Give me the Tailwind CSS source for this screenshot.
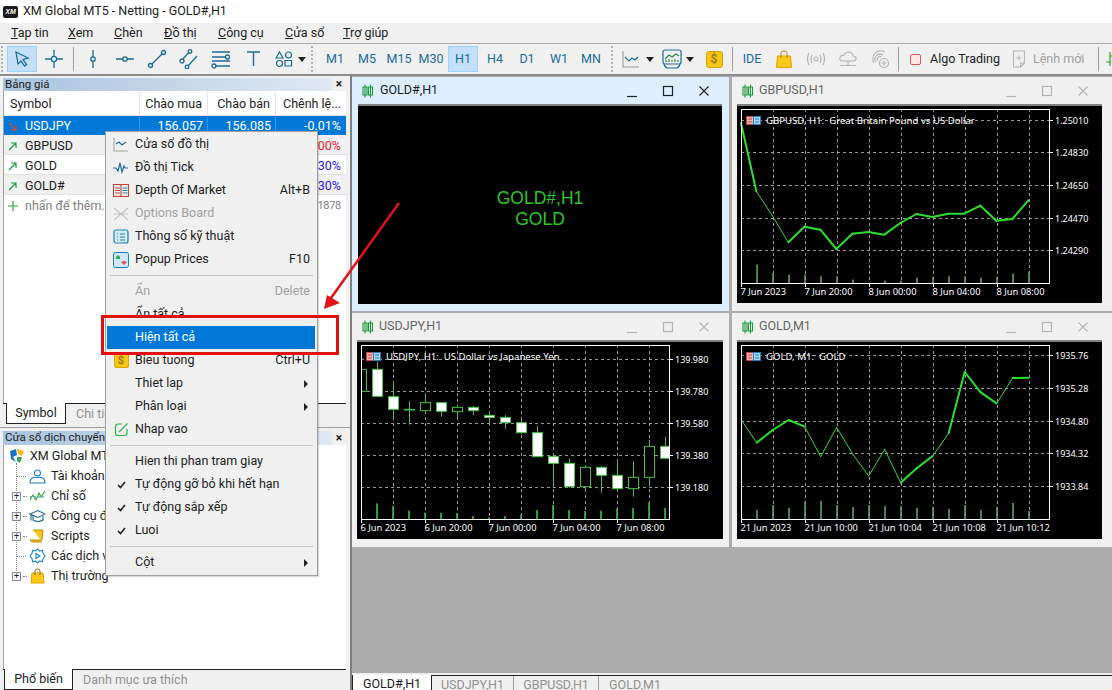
<!DOCTYPE html>
<html lang="en">
<head>
  <meta charset="UTF-8">
  <title>XM Global MT5</title>
  <script src="https://cdn.jsdelivr.net/npm/@tailwindcss/browser@4"></script>
</head>
<body class="relative w-[1112px] h-[690px] overflow-hidden bg-[#f0f0f0] font-['Roboto',sans-serif] text-[12.5px] text-[#1c1c1c]">

  <!-- title bar -->
  <div class="h-[23px] bg-white flex items-center pl-[3px] gap-[5px] text-[12.5px]">
    <div class="w-[15px] h-[12px] rounded-[2px] bg-[#1a1a1a] text-white text-[7px] font-bold italic leading-[12px] text-center font-['Liberation_Sans',sans-serif]">XM</div>
    <span>XM Global MT5 - Netting - GOLD#,H1</span>
  </div>

  <!-- menu -->
  <div class="h-[20px] flex items-center pl-[11px]">
    <span class="w-[57px]"><u>T</u>ap tin</span>
    <span class="w-[46px]"><u>X</u>em</span>
    <span class="w-[50px]"><u>C</u>hèn</span>
    <span class="w-[54px]"><u>Đ</u>ồ thị</span>
    <span class="w-[67px]"><u>C</u>ông cụ</span>
    <span class="w-[58px]"><u>C</u>ửa sổ</span>
    <span><u>T</u>rợ giúp</span>
  </div>

  <!-- toolbar -->
  <div class="h-[33px] border-t border-[#a8a8a8] border-b-2 border-b-[#8c8c8c] flex items-center overflow-hidden text-[#1b6a97] [&>*]:shrink-0">
    <div class="w-[6px] h-[26px] ml-[1px] mr-[-1px] border-l-2 border-dotted border-[#b0b0b0]"></div>
    <button class="w-[30px] h-[26px] mx-[1px] bg-[#c4e0f8] border border-[#99d1ff] flex items-center justify-center">
      <svg width="18" height="18" viewBox="0 0 18 18" fill="none" stroke="#1b6a97" stroke-width="1.3"><path d="M3 2l12 6-5 1.5 3.5 5-2 1.5-3.5-5L5 14z"/></svg>
    </button>
    <div class="w-8 flex justify-center"><svg width="20" height="20" viewBox="0 0 20 20" fill="none" stroke="#1b6a97" stroke-width="1.3"><path d="M10 1v6M10 13v6M1 10h6M13 10h6"/><circle cx="10" cy="10" r="2.6"/></svg></div>
    <div class="w-[7px] h-[24px] flex justify-center"><div class="w-px bg-[#a0a0a0]"></div></div>
    <div class="w-8 flex justify-center"><svg width="20" height="20" viewBox="0 0 20 20" fill="none" stroke="#1b6a97" stroke-width="1.3"><path d="M10 1v7M10 12v7"/><circle cx="10" cy="10" r="2.2"/></svg></div>
    <div class="w-8 flex justify-center"><svg width="20" height="20" viewBox="0 0 20 20" fill="none" stroke="#1b6a97" stroke-width="1.3"><path d="M1 10h7M12 10h7"/><circle cx="10" cy="10" r="2.2"/></svg></div>
    <div class="w-8 flex justify-center"><svg width="20" height="20" viewBox="0 0 20 20" fill="none" stroke="#1b6a97" stroke-width="1.3"><path d="M5 15L15 5"/><circle cx="3.5" cy="16.5" r="2"/><circle cx="16.5" cy="3.5" r="2"/></svg></div>
    <div class="w-8 flex justify-center"><svg width="20" height="20" viewBox="0 0 20 20" fill="none" stroke="#1b6a97" stroke-width="1.3"><path d="M4 10l6-7M9 17l9-10"/><circle cx="3" cy="12" r="2"/><circle cx="11" cy="2.5" r="1.8"/><circle cx="8" cy="18" r="1.8"/></svg></div>
    <div class="w-8 flex justify-center"><svg width="20" height="20" viewBox="0 0 20 20" fill="none" stroke="#1b6a97" stroke-width="1.3"><path d="M1 3h18M1 8h13M1 12h18M5 17h14"/><circle cx="16.5" cy="8" r="2"/><circle cx="3" cy="17" r="2"/></svg></div>
    <div class="w-8 flex justify-center"><svg width="20" height="20" viewBox="0 0 20 20" fill="none" stroke="#1b6a97" stroke-width="1.4"><path d="M4 3h13M10.500 3v14"/></svg></div>
    <div class="w-[42px] flex items-center pl-[6px] gap-[5px]">
      <svg width="18" height="18" viewBox="0 0 18 18" fill="none" stroke="#1b6a97" stroke-width="1.2"><path d="M4.500 2l3.500 6H1zM10 10.500h6.500V16H10z"/><circle cx="13.500" cy="5" r="3"/><circle cx="4.500" cy="13.500" r="3"/></svg>
      <svg width="8" height="5" viewBox="0 0 8 5"><path d="M0 0h8L4 5z" fill="#222"/></svg>
    </div>
    <div class="w-[8px] h-[26px] border-l-2 border-dotted border-[#b0b0b0]"></div>
    <div class="w-8 text-center">M1</div>
    <div class="w-8 text-center">M5</div>
    <div class="w-8 text-center">M15</div>
    <div class="w-8 text-center">M30</div>
    <div class="w-[30px] mx-px h-[26px] leading-[24px] text-center bg-[#c4e0f8] border border-[#99d1ff]">H1</div>
    <div class="w-8 text-center">H4</div>
    <div class="w-8 text-center">D1</div>
    <div class="w-8 text-center">W1</div>
    <div class="w-8 text-center">MN</div>
    <div class="w-[2px] h-[26px] ml-[4px] mr-[4px] border-l-2 border-dotted border-[#b0b0b0]"></div>
    <div class="w-[42px] flex items-center pl-[5px] gap-[6px]">
      <svg width="18" height="18" viewBox="0 0 18 18" fill="none" stroke="#1b6a97" stroke-width="1.1"><path d="M1 1v16h16" stroke="#999"/><path d="M3 7l4 4 3-3 3 2 3-3"/></svg>
      <svg width="8" height="5" viewBox="0 0 8 5"><path d="M0 0h8L4 5z" fill="#222"/></svg>
    </div>
    <div class="w-[41px] flex items-center pl-[3px] gap-[4px]">
      <svg width="20" height="20" viewBox="0 0 20 20" fill="none" stroke="#1b6a97" stroke-width="1.2"><rect x="1" y="1" width="18" height="14" rx="2"/><path d="M3 10l4-4 3 2 4-3 3 2M4 13v-2M7 13v-3M10 13v-2M13 13v-3M16 13v-2" stroke="#2a8a4a"/><path d="M2 15q1 4 4 4h8q3 0 4-4"/></svg>
      <svg width="8" height="5" viewBox="0 0 8 5"><path d="M0 0h8L4 5z" fill="#222"/></svg>
    </div>
    <div class="w-[28px] flex justify-center"><div class="w-[17px] h-[17px] rounded-[3px] bg-[#f5c518] border border-[#d9a400] text-[#9c7a10] text-[12px] font-bold leading-[15px] text-center">$</div></div>
    <div class="w-[8px] h-[24px] flex justify-center"><div class="w-px bg-[#a0a0a0]"></div></div>
    <div class="w-8 text-center">IDE</div>
    <div class="w-8 flex justify-center"><svg width="16" height="18" viewBox="0 0 16 18"><path d="M1.500 6h13l1 11.500H.5z" fill="#fbc91a" stroke="#d9a400"/><path d="M5 8V3.500Q5 1 8 1t3 2.500V8" fill="none" stroke="#b08a10"/></svg></div>
    <div class="w-8 flex justify-center"><svg width="20" height="16" viewBox="0 0 20 16" fill="none" stroke="#b4b4b4" stroke-width="1.2"><circle cx="10" cy="8" r="2"/><path d="M6 4Q4 8 6 12M14 4q2 4 0 8M3 2Q0 8 3 14M17 2q3 6 0 12"/></svg></div>
    <div class="w-8 flex justify-center"><svg width="20" height="18" viewBox="0 0 20 18" fill="none" stroke="#b4b4b4" stroke-width="1.2"><path d="M5 11Q1 11 2 7.500 3 5 6 5.500 7 2 11 2q4 .5 4 4 3.500.5 3 3-.5 2-3 2zM10 11v4M2 15.500h16"/></svg></div>
    <div class="w-8 flex justify-center"><svg width="20" height="20" viewBox="0 0 20 20" fill="none" stroke="#b4b4b4" stroke-width="1.2"><path d="M4 14A8 8 0 0 1 15 3M6 13A5 5 0 0 1 13 6M8 11.500a2.500 2.500 0 0 1 3.500-3.500"/><circle cx="14" cy="14" r="4.500"/><path d="M14 11.500v5M11.500 14h5"/></svg></div>
    <div class="w-[4px] h-[24px] flex justify-center"><div class="w-px bg-[#a0a0a0]"></div></div>
    <div class="w-[30px] flex justify-center"><div class="w-[11px] h-[11px] rounded-[2px] border border-[#d8574f] bg-[#fbe9e7]"></div></div>
    <div class="w-[75px] text-[#222]">Algo Trading</div>
    <div class="w-[28px] flex justify-center"><svg width="14" height="18" viewBox="0 0 14 18" fill="none" stroke="#b4b4b4" stroke-width="1.1"><path d="M1.500 1h11v12l-4 4h-7zM12.500 13h-4v4M7 5.500v5M4.500 8h5"/></svg></div>
    <div class="w-[60px] text-[#a0a0a0]">Lệnh mới</div>
    <div class="w-[10px] h-[24px] flex justify-center"><div class="w-px bg-[#a0a0a0]"></div></div>
    <svg class="ml-[2px]" width="12" height="18" viewBox="0 0 12 18" fill="none" stroke="#2aa52a" stroke-width="1.2"><path d="M5 2v14M1 12h4M5 6h6"/></svg>
  </div>

  <!-- main area -->
  <div class="flex h-[614px]">
    <!-- left column -->
    <div class="w-[350px] shrink-0 flex flex-col">
      <!-- market watch -->
      <div class="h-[351px] flex flex-col pl-[3px] pr-[4px] pt-[1px]">
        <div class="flex items-center h-[14px]">
          <div class="w-[329px] h-[13px] bg-gradient-to-r from-[#a8c4e0] to-[#dfe9f3] text-[11.5px] leading-[13px] pl-[2px]">Bảng giá</div>
          <div class="flex-1 text-center font-bold text-[12px] leading-[13px]">×</div>
        </div>
        <div class="h-[312px] bg-white border-l border-[#a0a0a0]">
          <div class="flex h-[25px] items-center border-b border-[#e0e0e0]">
            <div class="w-[136px] h-full pl-[6px] leading-[26px] border-r border-[#e6e6e6]">Symbol</div>
            <div class="w-[68px] h-full pr-[5px] leading-[26px] text-right border-r border-[#e6e6e6]">Chào mua</div>
            <div class="w-[68px] h-full pr-[5px] leading-[26px] text-right border-r border-[#e6e6e6]">Chào bán</div>
            <div class="w-[68px] h-full pl-[7px] leading-[26px]">Chênh lệ...</div>
          </div>
          <div class="flex h-[19px] pt-[2px] items-center bg-[#0078d7] text-white">
            <div class="w-[136px] pl-[4px] flex items-center gap-[8px] border-r border-[#3a96e0]"><svg width="9" height="9" viewBox="0 0 9 9" fill="none" stroke="#c0504d" stroke-width="1.300"><path d="M1 1l7 7M3 8h5V3"/></svg>USDJPY</div>
            <div class="w-[68px] pr-[4px] text-right border-r border-[#3a96e0]">156.057</div>
            <div class="w-[68px] pr-[4px] text-right border-r border-[#3a96e0]">156.085</div>
            <div class="w-[66px] pr-[1px] text-right">-0.01%</div>
          </div>
          <div class="flex h-[20px] pt-[3px] items-center bg-[#f0f0f0] border-b border-[#e2e2e2]">
            <div class="w-[272px] pl-[4px] flex items-center gap-[8px]"><svg width="9" height="9" viewBox="0 0 9 9" fill="none" stroke="#1d9a3c" stroke-width="1.200"><path d="M1 8l7-7M3 1h5v5"/></svg>GBPUSD</div>
            <div class="w-[66px] pr-[1px] text-right text-[#e0202a]">-0.00%</div>
          </div>
          <div class="flex h-[20px] pt-[3px] items-center border-b border-[#e2e2e2]">
            <div class="w-[272px] pl-[4px] flex items-center gap-[8px]"><svg width="9" height="9" viewBox="0 0 9 9" fill="none" stroke="#1d9a3c" stroke-width="1.200"><path d="M1 8l7-7M3 1h5v5"/></svg>GOLD</div>
            <div class="w-[66px] pr-[1px] text-right text-[#2222dd]">0.30%</div>
          </div>
          <div class="flex h-[20px] pt-[3px] items-center bg-[#f0f0f0] border-b border-[#e2e2e2]">
            <div class="w-[272px] pl-[4px] flex items-center gap-[8px]"><svg width="9" height="9" viewBox="0 0 9 9" fill="none" stroke="#1d9a3c" stroke-width="1.200"><path d="M1 8l7-7M3 1h5v5"/></svg>GOLD#</div>
            <div class="w-[66px] pr-[1px] text-right text-[#2222dd]">0.30%</div>
          </div>
          <div class="flex h-[20px] pt-[2px] items-center text-[#808080]">
            <div class="w-[272px] pl-[3px] flex items-center gap-[6px]"><svg width="12" height="12" viewBox="0 0 12 12" fill="none" stroke="#2aa52a" stroke-width="1.200"><path d="M6 1v10M1 6h10"/></svg>nhấn để thêm...</div>
            <div class="w-[66px] pr-[1px] text-right text-[11px] tracking-[-0.3px]">4 / 1878</div>
          </div>
        </div>
        <div class="h-[21px] flex border-t border-[#222]">
          <div class="w-[60px] ml-[3px] -mt-px bg-white border-x border-b border-[#222] text-center leading-[20px]">Symbol</div>
          <div class="pl-[10px] leading-[20px] text-[#909090]">Chi tiết</div>
        </div>
      </div>
      <!-- navigator -->
      <div class="flex-1 flex flex-col pl-[3px] pr-[4px] border-t border-[#a0a0a0] pt-[3px]">
        <div class="flex items-center h-[14px]">
          <div class="w-[329px] h-[14px] bg-gradient-to-r from-[#a8c4e0] to-[#dfe9f3] text-[11.5px] leading-[13px] pl-[2px]">Cửa sổ dịch chuyển</div>
          <div class="flex-1 text-center font-bold text-[12px] leading-[13px]">×</div>
        </div>
        <div class="relative h-[224px] bg-white border-l border-[#a0a0a0] pt-[1px]">
          <div class="absolute left-[12px] top-[18px] h-[112px] border-l border-dotted border-[#808080]"></div>
          <div class="flex items-center h-[20px] pl-[5px] gap-[5px]">
            <svg width="16" height="16" viewBox="0 0 16 16"><path d="M1 3l6-2 1 6-4 2 3 5-5-3z" fill="#1673c5"/><path d="M8 1l7 2-2 5-4-2z" fill="#f1b81c"/><path d="M8 9l5 0-2 6-3-2z" fill="#33a852"/></svg>
            <span>XM Global MT5</span>
          </div>
          <div class="flex items-center h-[20px] pl-[13px] gap-[3px]">
            <div class="w-[9px] border-t border-dotted border-[#808080]"></div>
            <svg width="17" height="15" viewBox="0 0 17 15" fill="none" stroke="#1b7fc4" stroke-width="1.100"><circle cx="8.500" cy="4" r="3"/><path d="M1 14q0-5 4-5.500h7q4 .5 4 5.500z"/></svg>
            <span class="ml-[2px]">Tài khoản</span>
          </div>
          <div class="flex items-center h-[20px] pl-[8px] gap-[2px]">
            <div class="w-[9px] h-[9px] bg-[#f4f4f4] border border-[#8a8a9a] flex items-center justify-center text-[9px] leading-none text-[#222]">+</div>
            <div class="w-[4px] border-t border-dotted border-[#808080]"></div>
            <svg width="17" height="12" viewBox="0 0 17 12" fill="none" stroke="#2aa52a" stroke-width="1.100"><path d="M1 10l3-5 3 5 3-7 2 4 4-6" /><path d="M1 7h15" stroke="#1b7fc4" stroke-dasharray="2 2"/></svg>
            <span class="ml-[3px]">Chỉ số</span>
          </div>
          <div class="flex items-center h-[20px] pl-[8px] gap-[2px]">
            <div class="w-[9px] h-[9px] bg-[#f4f4f4] border border-[#8a8a9a] flex items-center justify-center text-[9px] leading-none text-[#222]">+</div>
            <div class="w-[4px] border-t border-dotted border-[#808080]"></div>
            <svg width="17" height="14" viewBox="0 0 17 14" fill="none" stroke="#1b6a97" stroke-width="1.100"><path d="M1 5l8-3.500L16 5l-7 3.500zM4 7v4q5 3 10 0V7M2 5.500v6"/></svg>
            <span class="ml-[3px]">Công cụ đầu tư</span>
          </div>
          <div class="flex items-center h-[20px] pl-[8px] gap-[2px]">
            <div class="w-[9px] h-[9px] bg-[#f4f4f4] border border-[#8a8a9a] flex items-center justify-center text-[9px] leading-none text-[#222]">+</div>
            <div class="w-[4px] border-t border-dotted border-[#808080]"></div>
            <svg width="17" height="14" viewBox="0 0 17 14"><path d="M4 1h10l-1 10H1q1 2 3 2h9" fill="#f5c518" stroke="#b88d0e"/></svg>
            <span class="ml-[3px]">Scripts</span>
          </div>
          <div class="flex items-center h-[20px] pl-[13px] gap-[3px]">
            <div class="w-[9px] border-t border-dotted border-[#808080]"></div>
            <svg width="17" height="16" viewBox="0 0 17 16" fill="none" stroke="#1b7fc4" stroke-width="1.100"><path d="M8.500 1l2 2 3-.5.5 3 2 2.500-2 2.500-.5 3-3-.5-2 2-2-2-3 .5-.5-3-2-2.500 2-2.500.5-3 3 .5z"/><path d="M7 5.500v5l4-2.500z"/></svg>
            <span class="ml-[2px]">Các dịch vụ</span>
          </div>
          <div class="flex items-center h-[20px] pl-[8px] gap-[2px]">
            <div class="w-[9px] h-[9px] bg-[#f4f4f4] border border-[#8a8a9a] flex items-center justify-center text-[9px] leading-none text-[#222]">+</div>
            <div class="w-[4px] border-t border-dotted border-[#808080]"></div>
            <svg width="17" height="16" viewBox="0 0 17 16"><path d="M3 5h11l1 10H2z" fill="#fbc91a" stroke="#d9a400"/><path d="M6 7V3q0-2 2.500-2T11 3v4" fill="none" stroke="#8a6d10"/></svg>
            <span class="ml-[3px]">Thị trường</span>
          </div>
        </div>
        <div class="h-[21px] flex border-t border-[#222]">
          <div class="w-[69px] ml-px -mt-px bg-white border-x border-b border-[#222] text-center leading-[20px]">Phổ biến</div>
          <div class="pl-[10px] leading-[20px] text-[#909090]">Danh mục ưa thích</div>
        </div>
      </div>
    </div>

    <!-- chart area -->
    <div class="flex-1 flex flex-col bg-[#ababab] border-l-2 border-[#808080] min-w-0">
      <div class="flex-1 grid grid-cols-[377px_380px] grid-rows-[234px_234px] gap-x-[3px] gap-y-[2px] pt-[1px] overflow-hidden">
        <div class="bg-[#ddeeff] px-[6px] pb-[6px]">
          <div class="h-[27px] flex items-center gap-[6px] pl-[4px]">
            <svg width="12" height="14" viewBox="0 0 12 14" fill="none" stroke="#1d9a3c" stroke-width="1.100"><path d="M3 .5v13M8.500 .5v13M1 3h4v8H1zM6.500 3h4v8h-4z"/></svg>
            <span>GOLD#,H1</span>
            <div class="ml-auto flex items-center gap-[22px] pr-[12px]">
              <svg width="14" height="14" viewBox="0 0 14 14" fill="none" stroke="#222" stroke-width="1.200"><path d="M2 12.500h10"/></svg>
              <svg width="14" height="14" viewBox="0 0 14 14" fill="none" stroke="#222" stroke-width="1.200"><rect x="2.500" y="2.500" width="9" height="9"/></svg>
              <svg width="14" height="14" viewBox="0 0 14 14" fill="none" stroke="#222" stroke-width="1.200"><path d="M2.500 2.500l9 9M11.500 2.500l-9 9"/></svg>
            </div>
          </div>
          <div class="w-[364px] h-[200px] bg-black border-t-2 border-[#808080] flex flex-col items-center justify-center pt-[8px] text-[#2fc42f] text-[17.5px] leading-[21px] font-['Liberation_Sans',sans-serif]">
            <div>GOLD#,H1</div>
            <div>GOLD</div>
          </div>
        </div>
        <div class="bg-[#f0f0f0] px-[5px]" data-chart="gbp"></div>
        <div class="bg-[#f0f0f0] px-[5px]" data-chart="jpy"></div>
        <div class="bg-[#f0f0f0] px-[5px]" data-chart="gold"></div>
      </div>
      <!-- chart tabs -->
      <div class="h-[17px] bg-[#f0f0f0] pt-[2px] overflow-hidden">
        <div class="h-[15px] border-t border-[#222] flex leading-[18px] text-[#909090]">
          <div class="w-[80px] h-[16px] -mt-px bg-white border-l border-r border-[#222] text-[#1c1c1c] text-center">GOLD#,H1</div>
          <div class="w-[82px] text-center border-r border-[#a0a0a0]">USDJPY,H1</div>
          <div class="w-[85px] text-center border-r border-[#a0a0a0]">GBPUSD,H1</div>
          <div class="w-[72px] text-center">GOLD,M1</div>
        </div>
      </div>
    </div>
  </div>

  <!-- context menu -->
  <div class="absolute left-[105px] top-[131px] w-[213px] h-[445px] bg-[#f0f0f0] border border-[#a0a0a0] p-px shadow-[1px_1px_1px_rgba(0,0,0,0.15)]">
    <div class="h-[23px] flex items-center"><div class="w-[28px] flex justify-center"><svg width="16" height="15" viewBox="0 0 16 15" fill="none" stroke-width="1.100"><path d="M1 1v13h14" stroke="#a0a0a0"/><path d="M3 7l3-2 3 3 4-3" stroke="#1b6a97"/></svg></div><span>Cửa sổ đồ thị</span></div>
    <div class="h-[23px] flex items-center"><div class="w-[28px] flex justify-center"><svg width="16" height="12" viewBox="0 0 16 12" fill="none" stroke="#1b6a97" stroke-width="1.200"><path d="M0 6h3l2 3 2-8 2 9 2-6 1 2h3"/></svg></div><span>Đồ thị Tick</span></div>
    <div class="h-[23px] flex items-center"><div class="w-[28px] flex justify-center"><svg width="16" height="13" viewBox="0 0 16 13" fill="none" stroke-width="1.100"><rect x=".5" y=".5" width="15" height="12" stroke="#c8433c"/><path d="M8 1v11" stroke="#c8433c"/><path d="M2 4h5M2 6.500h5M2 9h5" stroke="#c8433c"/><path d="M9.500 4h5M9.500 6.500h5M9.500 9h5" stroke="#1b7fc4"/></svg></div><span>Depth Of Market</span><span class="ml-auto pr-[6px]">Alt+B</span></div>
    <div class="h-[23px] flex items-center text-[#a0a0a0]"><div class="w-[28px] flex justify-center"><svg width="16" height="14" viewBox="0 0 16 14" fill="none" stroke="#c4c4c4" stroke-width="1.100"><path d="M1 1l14 12M15 1L1 13M1 7h14"/></svg></div><span>Options Board</span></div>
    <div class="h-[23px] flex items-center"><div class="w-[28px] flex justify-center"><svg width="16" height="15" viewBox="0 0 16 15" fill="#d4ecfa" stroke="#1b7fc4" stroke-width="1.200"><rect x="1" y="1" width="14" height="13" rx="2"/><path d="M4 5h1M7 5h5M4 8h1M7 8h5M4 11h1M7 11h5" fill="none"/></svg></div><span>Thông số kỹ thuật</span></div>
    <div class="h-[23px] flex items-center"><div class="w-[28px] flex justify-center"><svg width="16" height="16" viewBox="0 0 16 16"><rect x=".5" y=".5" width="15" height="15" rx="2" fill="#cfe8f7" stroke="#1b7fc4"/><path d="M3 5l2-2 2 2v2H3z" fill="#35a852"/><path d="M8 10l3-1 3 1-3 3z" fill="#e05252"/></svg></div><span>Popup Prices</span><span class="ml-auto pr-[6px]">F10</span></div>
    <div class="h-[9px] flex items-center px-[3px]"><div class="w-full h-px bg-[#c4c4c4]"></div></div>
    <div class="h-[23px] flex items-center text-[#a0a0a0]"><span class="ml-[28px]">Ẩn</span><span class="ml-auto pr-[6px]">Delete</span></div>
    <div class="h-[23px] flex items-center"><span class="ml-[28px]">Ẩn tất cả</span></div>
    <div class="h-[23px] mr-px flex items-center bg-[#0078d7] text-white"><span class="ml-[28px]">Hiện tất cả</span></div>
    <div class="h-[23px] flex items-center"><div class="w-[28px] flex justify-center"><div class="w-[15px] h-[15px] rounded-[2px] bg-[#f5c518] border border-[#d9a400] text-[#9c7a10] text-[11px] font-bold leading-[13px] text-center">$</div></div><span>Bieu tuong</span><span class="ml-auto pr-[6px]">Ctrl+U</span></div>
    <div class="h-[23px] flex items-center"><span class="ml-[28px]">Thiet lap</span><svg class="ml-auto mr-[8px]" width="4" height="8" viewBox="0 0 4 8"><path d="M0 0l4 4-4 4z" fill="#222"/></svg></div>
    <div class="h-[23px] flex items-center"><span class="ml-[28px]">Phân loại</span><svg class="ml-auto mr-[8px]" width="4" height="8" viewBox="0 0 4 8"><path d="M0 0l4 4-4 4z" fill="#222"/></svg></div>
    <div class="h-[23px] flex items-center"><div class="w-[28px] flex justify-center"><svg width="15" height="15" viewBox="0 0 15 15" fill="none" stroke="#2fb344" stroke-width="1.200"><path d="M8 2H4Q1.500 2 1.500 5v6q0 2.500 2.500 2.500h6q3 0 3-3V7M5 10L13.500 1.500"/></svg></div><span>Nhap vao</span></div>
    <div class="h-[9px] flex items-center px-[3px]"><div class="w-full h-px bg-[#c4c4c4]"></div></div>
    <div class="h-[23px] flex items-center"><span class="ml-[28px]">Hien thi phan tram giay</span></div>
    <div class="h-[23px] flex items-center"><div class="w-[28px] flex justify-center"><svg width="9" height="8" viewBox="0 0 9 8" fill="none" stroke="#222" stroke-width="1.600"><path d="M1 4l2.500 2.500L8 1"/></svg></div><span>Tự động gỡ bỏ khi hết hạn</span></div>
    <div class="h-[23px] flex items-center"><div class="w-[28px] flex justify-center"><svg width="9" height="8" viewBox="0 0 9 8" fill="none" stroke="#222" stroke-width="1.600"><path d="M1 4l2.500 2.500L8 1"/></svg></div><span>Tự động sắp xếp</span></div>
    <div class="h-[23px] flex items-center"><div class="w-[28px] flex justify-center"><svg width="9" height="8" viewBox="0 0 9 8" fill="none" stroke="#222" stroke-width="1.600"><path d="M1 4l2.500 2.500L8 1"/></svg></div><span>Luoi</span></div>
    <div class="h-[9px] flex items-center px-[3px]"><div class="w-full h-px bg-[#c4c4c4]"></div></div>
    <div class="h-[23px] flex items-center"><span class="ml-[28px]">Cột</span><svg class="ml-auto mr-[8px]" width="4" height="8" viewBox="0 0 4 8"><path d="M0 0l4 4-4 4z" fill="#222"/></svg></div>
  </div>

  <!-- annotation: red box and arrow -->
  <div class="absolute left-[101px] top-[315px] w-[238px] h-[40px] border-[3px] border-[#e60f0f]"></div>
  <svg class="absolute left-0 top-0 pointer-events-none" width="1112" height="690" fill="none">
    <path d="M399 203L331 298" stroke="#e01414" stroke-width="2.500"/>
    <path d="M324 309L327 295 340 303z" fill="#e01414"/>
  </svg>

  <script>
    // zoomed coordinates from the chart, /3 to get pixels
    const charts = {
      gbp: {
        title: "GBPUSD,H1", legend: "GBPUSD, H1:\u00a0 Great Britain Pound vs US Dollar",
        ctrlPad: "pr-[17px]", blackW: "w-[365px]",
        oy: 88, ox: 32, volColor: "#5fa85f",
        hy: [122, 217, 316, 415, 511], prices: ["1.25010", "1.24830", "1.24650", "1.24470", "1.24290"],
        dates: ["7 Jun 2023", "7 Jun 20:00", "8 Jun 00:00", "8 Jun 04:00", "8 Jun 08:00"],
        bottom: 610,
        vols: [555, 580, 585, 585, 590, 590, 600, 610, 603, 603, 594, 591, 590, 590, 594, 591, 582, 575],
        line: [[32,130],[78,335],[126,408],[174,488],[222,441],[270,450],[318,508],[366,462],[414,457],[462,465],[510,430],[558,403],[606,412],[654,402],[702,402],[750,378],[798,423],[846,418],[894,362]],
        thin: [1, 2]
      },
      jpy: {
        title: "USDJPY,H1", legend: "USDJPY, H1:\u00a0 US Dollar vs Japanese Yen",
        ctrlPad: "pr-[13px]", blackW: "w-[366px]",
        oy: 105, ox: 34, volColor: "#46c046",
        hy: [148, 244, 340, 436, 532], prices: ["139.980", "139.780", "139.580", "139.380", "139.180"],
        dates: ["6 Jun 2023", "6 Jun 20:00", "7 Jun 00:00", "7 Jun 04:00", "7 Jun 08:00"],
        bottom: 628,
        vols: [580, 588, 602, 608, 608, 610, 618, 622, 618, 614, 600, 585, 600, 603, 602, 596, 594, 578, 594],
        candles: [[34,178,244,178,244,0],[82,178,259,155,259,1],[130,260,298,215,332,1],[178,298,300,273,344,1],[226,278,302,250,312,0],[274,278,304,278,320,1],[322,292,305,285,330,0],[370,292,302,288,315,1],[418,316,323,305,348,1],[466,322,338,315,356,1],[514,338,368,320,372,1],[562,368,440,348,440,1],[610,439,460,435,532,1],[658,460,530,445,533,1],[706,472,530,465,545,0],[754,472,496,468,548,1],[802,496,536,448,545,1],[850,502,536,454,560,0],[898,409,502,390,528,0],[946,409,445,380,445,1]]
      },
      gold: {
        title: "GOLD,M1", legend: "GOLD, M1:\u00a0 GOLD",
        ctrlPad: "pr-[17px]", blackW: "w-[365px]",
        oy: 105, ox: 31, volColor: "#5fa85f",
        hy: [136, 235, 332, 430, 529], prices: ["1935.76", "1935.28", "1934.80", "1934.32", "1933.84"],
        dates: ["21 Jun 2023", "21 Jun 10:00", "21 Jun 10:04", "21 Jun 10:08", "21 Jun 10:12"],
        bottom: 628,
        vols: [600, 585, 594, 575, 573, 585, 591, 585, 588, 588, 594, 591, 597, 585, 600, 591, 579, 603],
        line: [[32,330],[78,398],[126,360],[174,330],[222,350],[270,440],[318,352],[366,432],[414,498],[462,418],[510,518],[558,475],[606,438],[654,370],[702,186],[750,247],[798,280],[846,204],[894,203]],
        thin: [0, 4, 5, 6, 7, 8, 9, 12, 16]
      }
    };

    function drawChart(c) {
      const X = z => (z - c.ox) / 3 + 4;
      const Y = z => (z - c.oy) / 3 + 3;
      const TOP = 3, BOT = 177, LEFT = 4, RIGHT = 312;
      let s = "";
      // grid
      for (let i = 0; i < 9; i++) {
        const x = 36.5 + i * 32;
        s += `<path d="M${x} ${TOP}V${BOT}" stroke="#9a9a9a" stroke-dasharray="3 3"/>`;
      }
      c.hy.forEach((h, i) => {
        const y = Math.round(Y(h)) + 0.5;
        s += `<path d="M${LEFT} ${y}H${RIGHT}" stroke="#9a9a9a" stroke-dasharray="3 3"/>`;
        s += `<path d="M${RIGHT} ${y}h4" stroke="#fff"/>`;
        s += `<text x="318" y="${y + 3.5}" fill="#fff">${c.prices[i]}</text>`;
      });
      // volumes
      c.vols.forEach((v, i) => {
        const x = 20 + i * 16;
        s += `<rect x="${x - 0.75}" y="${Y(v)}" width="1.6" height="${BOT - Y(v)}" fill="${c.volColor}"/>`;
      });
      // price
      if (c.line) {
        for (let i = 0; i < c.line.length - 1; i++) {
          const a = c.line[i], b = c.line[i + 1];
          const w = c.thin.includes(i) ? 1 : 2;
          s += `<path d="M${X(a[0])} ${Y(a[1])}L${X(b[0])} ${Y(b[1])}" stroke="#2ee02e" stroke-width="${w}" stroke-linecap="round"/>`;
        }
      }
      if (c.candles) {
        s += `<clipPath id="plot"><rect x="4" y="3" width="308" height="174"/></clipPath><g clip-path="url(#plot)">`;
        c.candles.forEach(k => {
          const x = Math.round(X(k[0])) + 0.5;
          s += `<path d="M${x} ${Y(k[3])}V${Y(k[4])}" stroke="#46c046"/>`;
          s += `<rect x="${x - 5}" y="${Y(k[1])}" width="10" height="${Y(k[2]) - Y(k[1])}" fill="${k[5] ? "#fff" : "#000"}" stroke="#46c046"/>`;
        });
        s += `</g>`;
      }
      // frame and scale
      s += `<rect x="${LEFT}.5" y="${TOP}.5" width="${RIGHT - LEFT}" height="${BOT - TOP}" stroke="#fff"/>`;
      c.dates.forEach((d, i) => {
        const x = 4.5 + i * 64;
        s += `<path d="M${x} ${BOT}v4" stroke="#fff"/>`;
        s += `<text x="${x - 1}" y="189" fill="#fff" font-size="9.3">${d}</text>`;
      });
      // legend
      s += `<rect x="9" y="10" width="14" height="9" fill="#fff"/><rect x="9.500" y="10.500" width="7" height="8" fill="#f4b4b0" stroke="#c8433c"/><rect x="16.500" y="10.500" width="7" height="8" fill="#a8d8f0" stroke="#1b7fc4"/>`;
      s += `<path d="M11 13h4M11 16h4" stroke="#c8433c"/><path d="M18 13h4M18 16h4" stroke="#1b7fc4"/>`;
      s += `<text x="29" y="17.500" fill="#fff" font-size="9.6">${c.legend}</text>`;
      return s;
    }

    document.querySelectorAll("[data-chart]").forEach(win => {
      const c = charts[win.dataset.chart];
      win.innerHTML = `
        <div class="h-[27px] flex items-center gap-[5px] pl-[5px] text-[#666]">
          <svg width="12" height="14" viewBox="0 0 12 14" fill="none" stroke="#1d9a3c" stroke-width="1.1"><path d="M3 .5v13M8.5 .5v13M1 3h4v8H1zM6.5 3h4v8h-4z"/></svg>
          <span>${c.title}</span>
          <div class="ml-auto flex items-center gap-[22px] ${c.ctrlPad}">
            <svg width="14" height="14" viewBox="0 0 14 14" fill="none" stroke="#b4b4b4" stroke-width="1.2"><path d="M2 12.500h10"/></svg>
            <svg width="14" height="14" viewBox="0 0 14 14" fill="none" stroke="#b4b4b4" stroke-width="1.2"><rect x="2.500" y="2.500" width="9" height="9"/></svg>
            <svg width="14" height="14" viewBox="0 0 14 14" fill="none" stroke="#b4b4b4" stroke-width="1.2"><path d="M2.500 2.500l9 9M11.500 2.500l-9 9"/></svg>
          </div>
        </div>
        <div class="${c.blackW} h-[199px] bg-black border-t-2 border-[#808080]">
          <svg class="block" width="365" height="197" viewBox="0 0 365 197" fill="none" font-family="Noto Sans, sans-serif" font-size="9">${drawChart(c)}</svg>
        </div>`;
    });
  </script>
</body>
</html>
